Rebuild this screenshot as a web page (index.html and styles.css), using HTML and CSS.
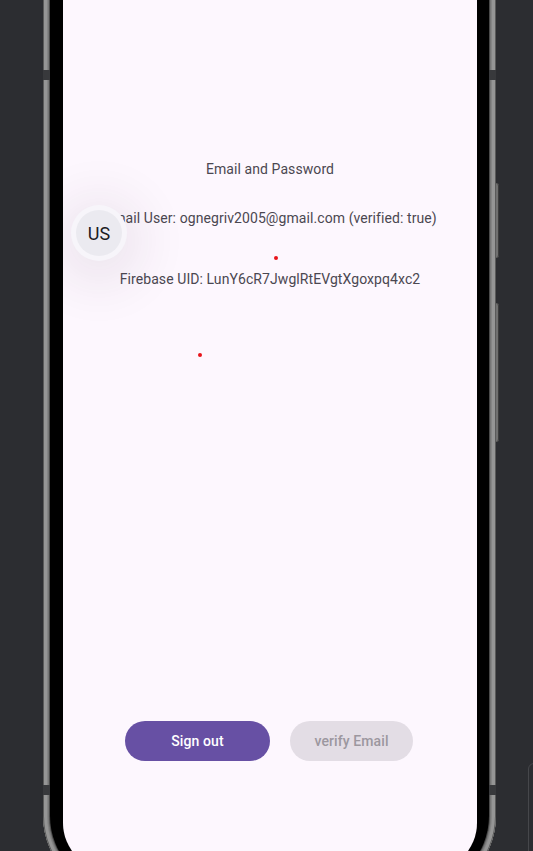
FILE: index.html
```html
<!DOCTYPE html>
<html>
<head>
<meta charset="utf-8">
<link rel="stylesheet" href="styles.css">
</head>
<body>
<div class="phone">
  <span class="notch-gap gap-l1"></span>
  <span class="notch-gap gap-r1"></span>
  <span class="notch-gap gap-l2"></span>
  <span class="notch-gap gap-r2"></span>
  <span class="side-btn side-btn-1"></span>
  <span class="side-btn side-btn-2"></span>
  <div class="bezel">
    <div class="screen">
      <p class="line title">Email and Password</p>
      <p class="line user">Email User: ognegriv2005@gmail.com (verified: true)</p>
      <p class="line uid">Firebase UID: LunY6cR7JwglRtEVgtXgoxpq4xc2</p>
      <div class="actions">
        <button class="btn btn-primary">Sign out</button>
        <button class="btn btn-disabled">verify Email</button>
      </div>
      <span class="dot dot-1"></span>
      <span class="dot dot-2"></span>
      <div class="avatar"><span class="avatar-inner">US</span></div>
    </div>
  </div>
</div>
<div class="edge-card"></div>
</body>
</html>
```

FILE: styles.css
```css
html, body {
  margin: 0;
  padding: 0;
}
body {
  width: 533px;
  height: 851px;
  overflow: hidden;
  background: #2c2d31;
  position: relative;
  font-family: Roboto, "Noto Sans", sans-serif;
}
.phone {
  position: relative;
  box-sizing: border-box;
  margin: -150px 0 0 43px;
  width: 453px;
  height: 1046px;
  padding: 7px;
  border-radius: 80px;
  background: #767676;
  box-shadow: inset 0 0 0 1px #5a5a5a, inset 0 0 0 4px #959595, inset 0 0 0 5px #858585;
}
.notch-gap {
  position: absolute;
  width: 7px;
  height: 10px;
  background: #38393c;
}
.gap-l1 { left: 0; top: 220px; }
.gap-r1 { right: 0; top: 220px; }
.gap-l2 { left: 0; top: 935px; }
.gap-r2 { right: 0; top: 935px; }
.side-btn {
  position: absolute;
  left: 453px;
  width: 3px;
  background: #707070;
  border-radius: 0 3px 3px 0;
  box-shadow: inset -1px 0 0 #3d3d3d;
}
.side-btn-1 { top: 333px; height: 75px; }
.side-btn-2 { top: 453px; height: 139px; }
.bezel {
  box-sizing: border-box;
  height: 100%;
  padding: 13px 12px 13px 13px;
  background: #000;
  border-radius: 73px;
  box-shadow: 0 0 0 1px #4a4a4a;
}
.screen {
  position: relative;
  box-sizing: border-box;
  height: 1001px;
  padding-top: 289px;
  background: #fdf7fe;
  border-radius: 48px;
  display: flex;
  flex-direction: column;
  align-items: center;
  overflow: hidden;
}
.line {
  margin: 0;
  font-size: 14px;
  line-height: 20px;
  letter-spacing: 0.08px;
  color: #4b4751;
  white-space: nowrap;
}
.user { margin-top: 29px; margin-left: 2px; }
.uid { margin-top: 41px; }
.actions {
  margin-top: 432px;
  display: flex;
  gap: 20px;
  margin-left: -2px;
}
.btn {
  height: 40px;
  border: 0;
  border-radius: 20px;
  font-family: Roboto, "Noto Sans", sans-serif;
  font-size: 14px;
  font-weight: 500;
  letter-spacing: 0.1px;
  padding: 0;
}
.btn-primary {
  width: 145px;
  background: #6750a4;
  color: #ffffff;
}
.btn-disabled {
  width: 123px;
  background: #e3dde5;
  color: #9c979f;
}
.dot {
  position: absolute;
  width: 4px;
  height: 4px;
  border-radius: 50%;
  background: #e8141b;
}
.dot-1 { left: 211px; top: 386px; }
.dot-2 { left: 135px; top: 483px; }
.avatar {
  position: absolute;
  left: 8px;
  top: 335px;
  width: 56px;
  height: 56px;
  border-radius: 50%;
  background: #f7f5fa;
  box-shadow: 0 8px 48px 18px rgba(60, 40, 70, 0.08);
  display: flex;
  align-items: center;
  justify-content: center;
}
.avatar-inner {
  width: 46px;
  height: 46px;
  border-radius: 50%;
  background: #ebeaf0;
  display: flex;
  align-items: center;
  justify-content: center;
  font-size: 18px;
  color: #1c1b1f;
}
.edge-card {
  position: absolute;
  left: 528px;
  top: 763px;
  width: 30px;
  height: 200px;
  border: 1px solid #46474b;
  border-radius: 6px;
}
```
